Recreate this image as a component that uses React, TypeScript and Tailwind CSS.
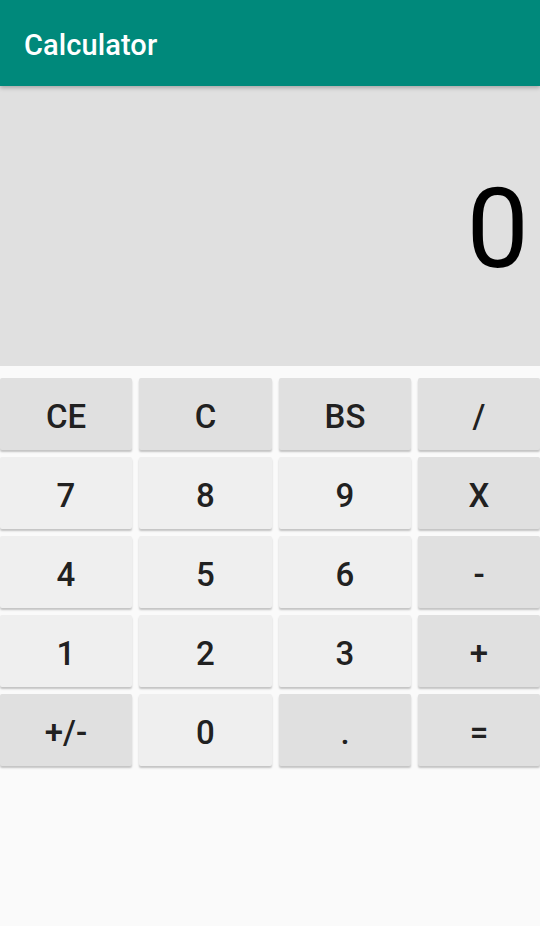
import React, { useState } from 'react';

type Key = { label: string; op?: boolean };

const keys: Key[] = [
  { label: 'CE', op: true },
  { label: 'C', op: true },
  { label: 'BS', op: true },
  { label: '/', op: true },
  { label: '7' },
  { label: '8' },
  { label: '9' },
  { label: 'X', op: true },
  { label: '4' },
  { label: '5' },
  { label: '6' },
  { label: '-', op: true },
  { label: '1' },
  { label: '2' },
  { label: '3' },
  { label: '+', op: true },
  { label: '+/-', op: true },
  { label: '0' },
  { label: '.', op: true },
  { label: '=', op: true },
];

const App = () => {
  const [display, setDisplay] = useState('0');

  const press = (k: string) => {
    if (/^[0-9]$/.test(k)) {
      setDisplay((d) => (d === '0' ? k : d + k));
    } else if (k === 'C' || k === 'CE') {
      setDisplay('0');
    } else if (k === 'BS') {
      setDisplay((d) => (d.length > 1 ? d.slice(0, -1) : '0'));
    }
  };

  return (
    <div className="w-[540px] h-[926px] bg-[#fafafa] flex flex-col font-['Roboto',sans-serif]">
      <header className="relative z-10 h-[86px] bg-[#00897b] flex items-center px-6 pt-[5px] shadow-[0_2px_4px_rgba(0,0,0,0.25)]">
        <h1 className="text-white text-[29px] font-medium tracking-[0.1px]">Calculator</h1>
      </header>

      <div className="h-[280px] bg-[#e0e0e0] flex items-center justify-end pr-[11px] pt-[6px]">
        <span className="text-[111px] leading-none text-black">{display}</span>
      </div>

      <div className="grid grid-cols-[132px_133px_132px_1fr] gap-x-[7px] gap-y-[7px] mt-[12px]">
        {keys.map((k) => (
          <button
            key={k.label}
            onClick={() => press(k.label)}
            className={`h-[72px] rounded-[2px] flex items-center justify-center pt-[5px] text-[33px] font-medium text-[#212121] shadow-[0_2px_2px_rgba(0,0,0,0.22)] ${
              k.op ? 'bg-[#e0e0e0]' : 'bg-[#efefef]'
            }`}
          >
            {k.label}
          </button>
        ))}
      </div>
    </div>
  );
};

export default App;
